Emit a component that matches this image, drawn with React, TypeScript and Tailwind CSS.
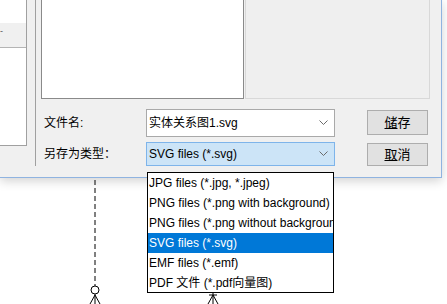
const types = [
  "JPG files (*.jpg, *.jpeg)",
  "PNG files (*.png with background)",
  "PNG files (*.png without background)",
  "SVG files (*.svg)",
  "EMF files (*.emf)",
  "PDF 文件 (*.pdf向量图)",
];

const Chevron = () => (
  <svg width="9" height="6" viewBox="0 0 9 6" className="shrink-0">
    <polyline points="0.5,0.5 4.5,4.5 8.5,0.5" fill="none" stroke="#6b6b6b" strokeWidth="1" />
  </svg>
);

const App = () => {
  return (
    <div className="relative w-[447px] h-[304px] overflow-hidden bg-white text-black font-['Liberation_Sans','Noto_Sans_CJK_SC',sans-serif]">
      {/* save dialog */}
      <div className="relative z-10 w-[442px] h-[178px] flex bg-[#f0f0f0] border-r border-b border-[#8fb3e0] shadow-[0_3px_10px_rgba(0,0,0,0.18)]">
        {/* navigation pane */}
        <div className="w-[27px] h-[146px] flex flex-col bg-white border-r border-b border-[#a0a0a0]">
          <div className="h-[23px]" />
          <div className="h-[25px] bg-[#f0f0f0] border-b border-[#b4b4b4] text-[9px] leading-none pt-[4px] text-[#555]">-</div>
        </div>
        <div className="w-[8px]" />

        {/* main area */}
        <div className="h-[166px] flex-1 flex flex-col border-l border-[#a0a0a0]">
          <div className="flex h-[101px] pl-[5px]">
            <div className="w-[203px] bg-white border-l border-r border-b border-[#8a8a8a]" />
            <div className="w-[1px]" />
            <div className="w-[185px] h-[99px] bg-[#efefef] border-l border-r border-b border-[#d8d8d8]" />
          </div>

          <div className="mt-[10px] flex items-center h-[28px] pl-[8px] text-[12px]">
            <div className="w-[102px]">文件名:</div>
            <div className="w-[189px] h-[28px] flex items-center justify-between bg-white border border-[#a9a9a9] pl-[2px] pr-[6px]">
              <span>实体关系图1.svg</span>
              <Chevron />
            </div>
            <button className="self-start mt-[1px] ml-[32px] w-[61px] h-[25px] bg-[#e1e1e1] border border-[#adadad] text-[13px]">
              <span className="underline">储</span>存
            </button>
          </div>

          <div className="mt-[5px] flex items-center h-[24px] pl-[8px] text-[12px]">
            <div className="w-[102px]">另存为类型：</div>
            <div className="w-[189px] h-[24px] flex items-center justify-between bg-[#cce4f7] border border-[#7eb4ea] pl-[2px] pr-[6px]">
              <span>SVG files (*.svg)</span>
              <Chevron />
            </div>
            <button className="self-start mt-[1px] ml-[32px] w-[61px] h-[23px] bg-[#e1e1e1] border border-[#adadad] text-[13px]">
              <span className="underline">取</span>消
            </button>
          </div>
        </div>
      </div>

      {/* diagram canvas */}
      <svg className="absolute left-0 top-0 pointer-events-none" width="447" height="304">
        <line x1="95" y1="180" x2="95" y2="286" stroke="#000" strokeWidth="1" strokeDasharray="5 3" />
        <circle cx="95" cy="290" r="4" fill="#fff" stroke="#000" strokeWidth="1" />
        <line x1="95" y1="294" x2="95" y2="304" stroke="#000" strokeWidth="1" />
        <line x1="95" y1="295" x2="90" y2="304" stroke="#000" strokeWidth="1" />
        <line x1="95" y1="295" x2="100" y2="304" stroke="#000" strokeWidth="1" />
        <line x1="213" y1="293" x2="213" y2="304" stroke="#000" strokeWidth="1" />
        <line x1="209" y1="295" x2="217" y2="295" stroke="#000" strokeWidth="1" />
        <line x1="213" y1="295" x2="208" y2="304" stroke="#000" strokeWidth="1" />
        <line x1="213" y1="295" x2="218" y2="304" stroke="#000" strokeWidth="1" />
      </svg>

      {/* open type list */}
      <div className="absolute z-20 left-[147px] top-[172px] w-[187px] h-[121px] bg-white border border-black overflow-hidden">
        {types.map((t) => (
          <div
            key={t}
            className={
              t === "SVG files (*.svg)"
                ? "h-[20px] leading-[20px] pl-[1px] text-[12px] whitespace-nowrap bg-[#0078d7] text-white"
                : "h-[20px] leading-[20px] pl-[1px] text-[12px] whitespace-nowrap"
            }
          >
            {t}
          </div>
        ))}
      </div>
    </div>
  );
};

export default App;
